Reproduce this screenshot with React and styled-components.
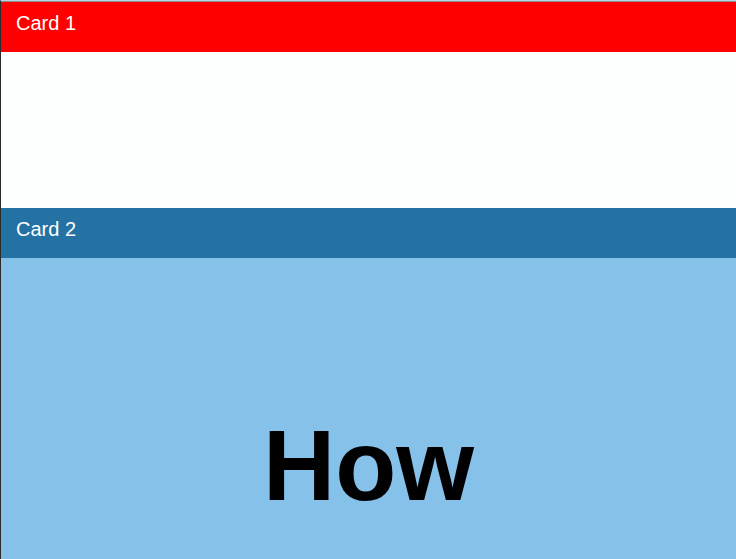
import React from "react";
import styled, { createGlobalStyle } from "styled-components";

const GlobalStyle = createGlobalStyle`
  * { box-sizing: border-box; }
  body { margin: 0; font-family: "Liberation Sans", Arial, sans-serif; }
`;

const Stack = styled.main`
  display: flex;
  flex-direction: column;
  height: 100vh;
  overflow: hidden;
  padding-top: 1px;
  background: #8f8f8f;
  border-top: 1px solid #b0d8e2;
  border-left: 1px solid #2b2b2b;
`;

const Card = styled.section`
  display: flex;
  flex-direction: column;
  flex: none;
  background: ${(p) => p.$background};
  min-height: ${(p) => p.$minHeight};
`;

const CardHeader = styled.header`
  height: 50px;
  padding: 9px 15px;
  font-size: 20px;
  line-height: 24px;
  color: #fff;
  background: ${(p) => p.$background};
`;

const CardBody = styled.div`
  display: flex;
  flex: 1;
  justify-content: center;
  padding: 150px 16px 0;
`;

const Title = styled.h1`
  margin: 0;
  font-size: 100px;
  line-height: 115px;
  font-weight: 700;
  color: #000;
`;

export default function App() {
  return (
    <>
      <GlobalStyle />
      <Stack>
        <Card $background="#fdfffe" $minHeight="206px">
          <CardHeader $background="#ff0000">Card 1</CardHeader>
        </Card>
        <Card $background="#85c1e9" $minHeight="100vh">
          <CardHeader $background="#2471a3">Card 2</CardHeader>
          <CardBody>
            <Title>How</Title>
          </CardBody>
        </Card>
      </Stack>
    </>
  );
}
